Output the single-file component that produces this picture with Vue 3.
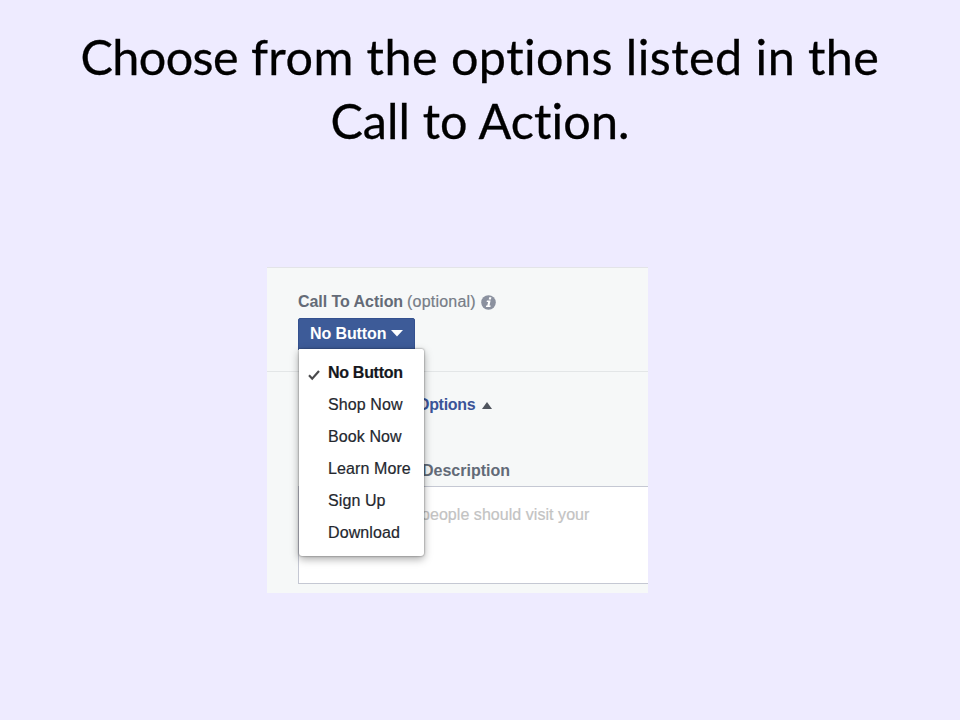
<script setup>
import {ref} from "vue";

const options=['No Button','Shop Now','Book Now','Learn More','Sign Up','Download']
const current=ref('No Button')

function chooseOption(name){
  current.value=name
}
</script>

<template>
  <div class="slide">
    <h1 class="title"><span class="line-one"><span class="tight">Choose</span> from the options listed in the</span><br><span class="line-two">Call to Action.</span></h1>

    <div class="panel">
      <section class="action-section">
        <div class="label">
          <b>Call To Action</b>
          <span class="optional">(optional)</span>
          <svg class="info" viewBox="0 0 15 15">
            <circle cx="7.5" cy="7.5" r="7.3" fill="#8b919f"/>
            <path d="M8.2 2.3h2.2l-.5 2.2H7.7zM5.9 5.5h3.7l-1.1 4.9h1.2l-.3 1.7H4.9l.3-1.7h1.1l.8-3.3H5.6z" fill="#fff"/>
          </svg>
        </div>
        <div class="select">
          <button class="select-button">
            <span>{{ current }}</span>
            <svg class="caret" viewBox="0 0 12 7"><path d="M0 0h12L6 6.6z" fill="#fff"/></svg>
          </button>
          <ul class="menu">
            <li v-for="item in options" :key="item" :class="{'is-chosen':item===current}" @click="chooseOption(item)">
              <svg v-if="item===current" class="check" viewBox="0 0 12 12">
                <path d="M1 6.3l3.2 3.4L11 2" fill="none" stroke="#4a4a4c" stroke-width="2.2"/>
              </svg>
              <span class="item-text">{{ item }}</span>
            </li>
          </ul>
        </div>
      </section>

      <section class="detail-section">
        <div class="toggle">
          <b>Options</b>
          <svg class="arrow" viewBox="0 0 10 7"><path d="M5 0l5 7H0z" fill="#50555e"/></svg>
        </div>
        <div class="heading"><b>Description</b></div>
        <div class="textarea"><span>people should visit your</span></div>
      </section>
    </div>
  </div>
</template>

<style>
body {
  margin: 0;
  background: #eeebff;
}
</style>

<style scoped>
.slide {
  width: 960px;
  height: 720px;
  overflow: hidden;
  background: #eeebff;
  font-family: "Liberation Sans", Arial, sans-serif;
}

.title {
  margin: 0;
  padding-top: 24px;
  height: 240px;
  box-sizing: border-box;
  text-align: center;
  font-family: Lato, sans-serif;
  font-weight: 400;
  font-size: 48.5px;
  line-height: 64px;
  font-variant-ligatures: none;
  -webkit-text-stroke: 0.3px #000;
  color: #000;
  white-space: nowrap;
}

.line-one {
  letter-spacing: 0.45px;
}

.tight {
  letter-spacing: -0.6px;
}

.line-two {
  letter-spacing: 0.1px;
}

.panel {
  width: 381px;
  height: 326px;
  margin: 27px 0 0 267px;
  box-sizing: border-box;
  border-top: 1px solid #e3e4e8;
  background: #f6f8f8;
  font-size: 16px;
}

.action-section {
  height: 104px;
  box-sizing: border-box;
  padding: 24px 0 0 31px;
  border-bottom: 1px solid #e3e6e7;
}

.label {
  display: flex;
  align-items: center;
  height: 20px;
  color: #646b77;
  white-space: nowrap;
}

.label b {
  width: 109px;
  letter-spacing: -0.05px;
}

.optional {
  width: 74px;
  color: #777d87;
  letter-spacing: 0.22px;
  -webkit-text-stroke: 0.2px #777d87;
}

.info {
  width: 15px;
  height: 15px;
}

.select {
  position: relative;
  margin-top: 6px;
}

.select-button {
  display: flex;
  align-items: center;
  gap: 5px;
  width: 117px;
  height: 32px;
  padding: 0 0 1px 11px;
  border: 1px solid #34518f;
  border-radius: 2px 2px 0 0;
  background: #3d5b98;
  box-sizing: border-box;
  color: #fff;
  font: bold 16px "Liberation Sans", Arial, sans-serif;
  letter-spacing: -0.1px;
  white-space: nowrap;
}

.caret {
  width: 12px;
  height: 7px;
}

.menu {
  position: absolute;
  top: 31px;
  left: 1px;
  z-index: 1;
  width: 125px;
  height: 207px;
  margin: 0;
  padding: 8px 0 0;
  box-sizing: border-box;
  border-radius: 0 2px 3px 3px;
  background: #fff;
  box-shadow: 0 0 2px rgba(0, 0, 0, .55), 0 3px 8px rgba(0, 0, 0, .35);
  list-style: none;
}

.menu li {
  display: flex;
  align-items: center;
  height: 32px;
  padding-left: 29px;
  color: #24272e;
  letter-spacing: 0.1px;
  -webkit-text-stroke: 0.2px #24272e;
  white-space: nowrap;
  cursor: pointer;
}

.menu .is-chosen {
  padding-left: 9px;
  font-weight: bold;
  color: #15171c;
  letter-spacing: -0.3px;
}

.check {
  width: 12px;
  height: 12px;
  margin: 3px 8px 0 0;
}

.detail-section {
  padding-left: 31px;
}

.toggle {
  display: flex;
  align-items: center;
  height: 20px;
  padding: 23px 0 0 119px;
  color: #3b5498;
}

.toggle b {
  width: 65px;
  letter-spacing: -0.3px;
}

.arrow {
  width: 10px;
  height: 7px;
}

.heading {
  height: 20px;
  padding: 46px 0 0 124px;
  line-height: 20px;
  color: #626a77;
}

.textarea {
  height: 98px;
  margin-top: 5px;
  padding: 18px 0 0 122px;
  box-sizing: border-box;
  border: 1px solid #c5c8d3;
  border-right: 0;
  background: #fff;
  line-height: 20px;
  color: #c3c3c3;
  letter-spacing: 0.05px;
  -webkit-text-stroke: 0.2px #c3c3c3;
  white-space: nowrap;
}
</style>
